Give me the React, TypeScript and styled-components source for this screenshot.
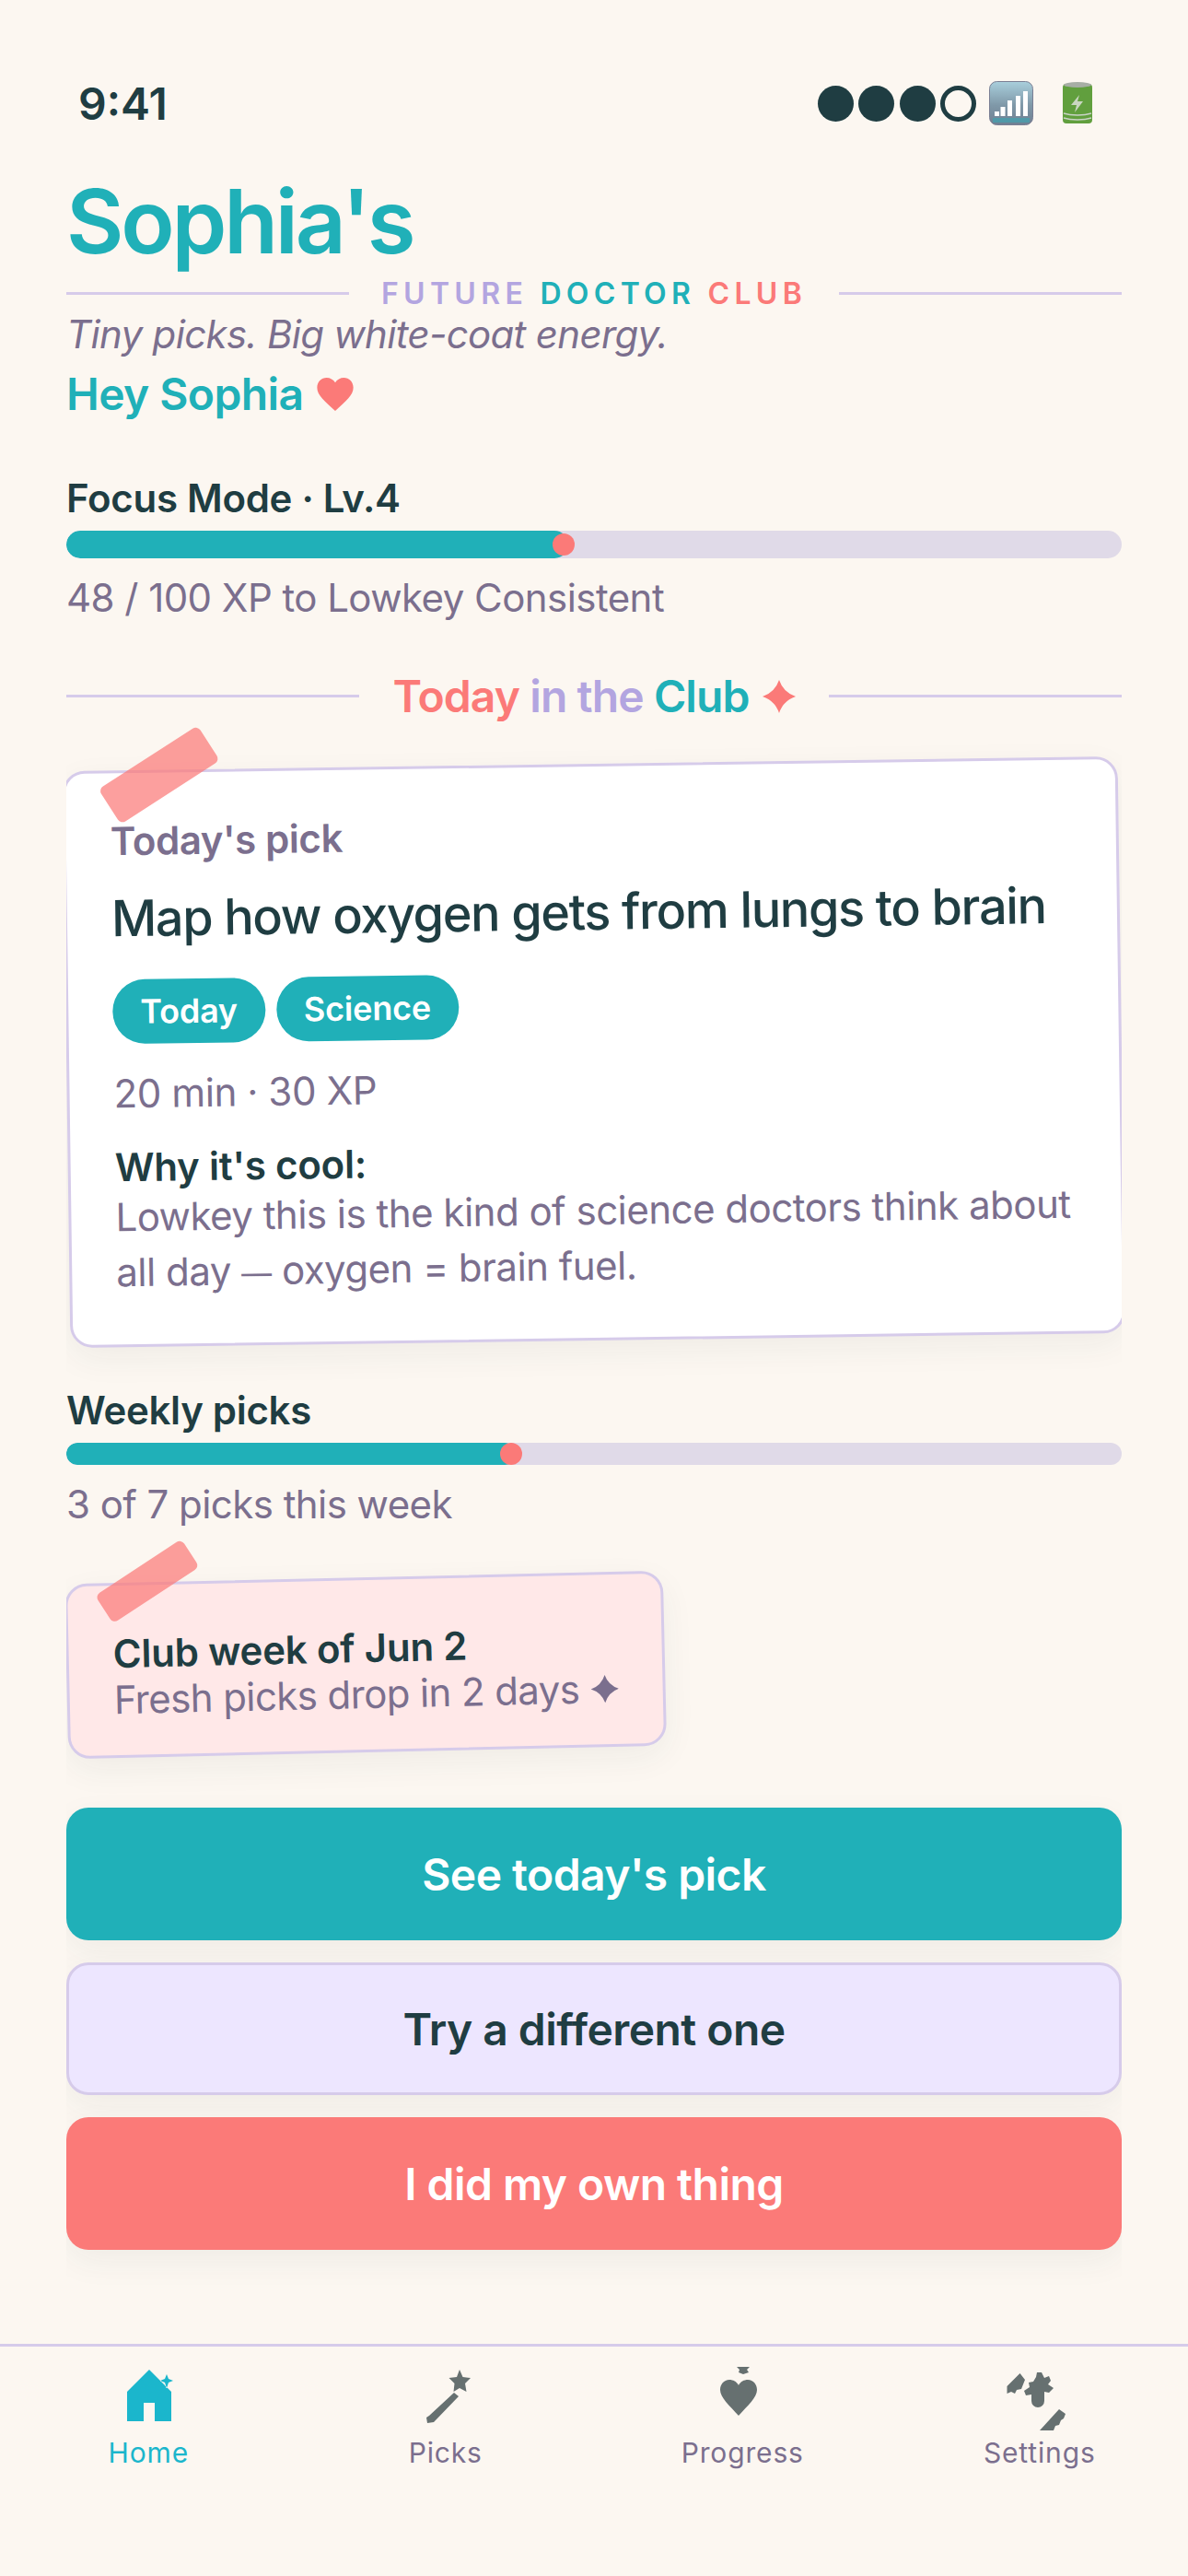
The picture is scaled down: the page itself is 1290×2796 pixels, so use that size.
import React from "react";
import styled, { createGlobalStyle } from "styled-components";

const INK = "#1f3d42";
const MUTED = "#7b6f8e";
const TEAL = "#20b0b8";
const CORAL = "#fb7a78";
const LAVENDER = "#b3a5e0";
const LINE = "#d6cbea";
const PAPER = "#fcf7f1";

const GlobalStyle = createGlobalStyle`
  html, body {
    margin: 0;
    padding: 0;
    background: ${PAPER};
  }
  body {
    font-family: Inter, "Liberation Sans", sans-serif;
    color: ${INK};
  }
`;

const Screen = styled.div`
  width: 1290px;
  height: 2796px;
  display: flex;
  flex-direction: column;
  background: ${PAPER};
  overflow: hidden;
`;

const StatusBar = styled.div`
  height: 48px;
  margin-top: 88px;
  padding: 0 104px 0 85px;
  display: flex;
  align-items: center;
  justify-content: space-between;
`;

const Clock = styled.span`
  font-size: 48px;
  font-weight: 600;
  color: ${INK};
`;

const StatusIcons = styled.div`
  display: flex;
  align-items: center;
`;

const Dot = styled.span<{ $empty?: boolean }>`
  width: 39px;
  height: 39px;
  box-sizing: border-box;
  border-radius: 50%;
  margin-right: ${(p) => (p.$empty ? 14 : 5.5)}px;
  background: ${(p) => (p.$empty ? "transparent" : INK)};
  border: ${(p) => (p.$empty ? `5px solid ${INK}` : "none")};
`;

const BatterySlot = styled.span`
  margin-left: 32px;
  display: flex;
`;

const Content = styled.main`
  flex: 1;
  margin: 0 72px;
  padding-top: 46px;
  overflow: hidden;
`;

const Title = styled.h1`
  margin: 0;
  font-size: 96px;
  line-height: 116px;
  font-weight: 600;
  letter-spacing: -3.2px;
  color: ${TEAL};
`;

const Rule = styled.div`
  flex: 1;
  height: 3px;
  background: ${LINE};
`;

const BrandRow = styled.div`
  display: flex;
  align-items: center;
  gap: 35px;
  height: 36px;
  margin-top: 2px;
`;

const Brand = styled.span`
  font-size: 32px;
  font-weight: 600;
  letter-spacing: 5.3px;
`;

const Tone = styled.span<{ $color: string }>`
  color: ${(p) => p.$color};
`;

const Tagline = styled.p`
  margin: 0;
  font-size: 42px;
  line-height: 54px;
  font-style: italic;
  letter-spacing: -0.68px;
  color: ${MUTED};
`;

const Greeting = styled.p`
  margin: 6px 0 0;
  font-size: 48px;
  line-height: 64px;
  font-weight: 600;
  letter-spacing: -0.6px;
  color: ${TEAL};
  display: flex;
  align-items: center;
  gap: 14px;
`;

const MeterLabel = styled.div<{ $top: number }>`
  margin-top: ${(p) => p.$top}px;
  font-size: 42px;
  line-height: 54px;
  font-weight: 600;
  letter-spacing: -0.3px;
  color: ${INK};
`;

const Track = styled.div<{ $h: number }>`
  position: relative;
  height: ${(p) => p.$h}px;
  margin-top: 8px;
  border-radius: ${(p) => p.$h / 2}px;
  background: #e0dae8;
  overflow: hidden;
`;

const Fill = styled.div`
  height: 100%;
  border-radius: 16px;
  background: ${TEAL};
`;

const Knob = styled.span`
  position: absolute;
  top: 50%;
  width: 24px;
  height: 24px;
  margin: -12px 0 0 -12px;
  border-radius: 50%;
  background: ${CORAL};
`;

const MeterNote = styled.div`
  margin-top: 16px;
  font-size: 42px;
  line-height: 54px;
  letter-spacing: -0.55px;
  color: ${MUTED};
`;

const SectionRow = styled.div`
  margin-top: 51px;
  display: flex;
  align-items: center;
  gap: 36px;
`;

const SectionRule = styled(Rule)`
  position: relative;
  top: -1px;
`;

const SectionTitle = styled.h2`
  margin: 0;
  font-size: 48px;
  line-height: 58px;
  font-weight: 600;
  letter-spacing: -0.9px;
  display: flex;
  align-items: center;
  gap: 14px;
`;

const PickCard = styled.section`
  position: relative;
  height: 626px;
  margin-top: 44px;
  box-sizing: border-box;
  padding: 47px 48px 0;
  background: #fff;
  border: 3px solid ${LINE};
  border-radius: 24px;
  box-shadow: 0 12px 36px rgba(31, 61, 66, 0.06);
  transform: rotate(-0.8deg);
`;

const Tape = styled.span<{ $w: number; $h: number; $left: number; $top: number }>`
  position: absolute;
  left: ${(p) => p.$left}px;
  top: ${(p) => p.$top}px;
  width: ${(p) => p.$w}px;
  height: ${(p) => p.$h}px;
  border-radius: 6px;
  background: rgba(251, 122, 120, 0.72);
  transform: rotate(-32deg);
`;

const PickKicker = styled.div`
  font-size: 42px;
  line-height: 54px;
  font-weight: 600;
  letter-spacing: -0.4px;
  color: ${MUTED};
`;

const PickTitle = styled.h3`
  margin: 21px 0 0;
  font-size: 54px;
  line-height: 72px;
  font-weight: 500;
  letter-spacing: -1.36px;
  color: ${INK};
  white-space: nowrap;
`;

const Chips = styled.div`
  display: flex;
  gap: 12px;
  margin-top: 30px;
`;

const Chip = styled.span`
  height: 70px;
  padding: 0 30px;
  display: flex;
  align-items: center;
  border-radius: 35px;
  background: ${TEAL};
  color: #fff;
  font-size: 36px;
  font-weight: 600;
  letter-spacing: -0.2px;
`;

const PickMeta = styled.div`
  margin-top: 27px;
  font-size: 42px;
  line-height: 54px;
  letter-spacing: -0.4px;
  color: ${MUTED};
`;

const WhyTitle = styled.div`
  margin-top: 29px;
  font-size: 42px;
  line-height: 48px;
  font-weight: 600;
  letter-spacing: -0.2px;
  color: ${INK};
`;

const WhyBody = styled.p`
  margin: 0;
  font-size: 42px;
  line-height: 60px;
  letter-spacing: -0.5px;
  color: ${MUTED};
`;

const Dash = styled.span`
  font-size: 33px;
`;

const NoteCard = styled.section`
  position: relative;
  width: 650px;
  height: 190px;
  margin-top: 52px;
  box-sizing: border-box;
  padding: 49px 48px 0;
  background: #ffe8e8;
  border: 3px solid ${LINE};
  border-radius: 24px;
  box-shadow: 0 12px 36px rgba(31, 61, 66, 0.06);
  transform: rotate(-1.3deg);
`;

const NoteTitle = styled.div`
  font-size: 42px;
  line-height: 50px;
  font-weight: 600;
  letter-spacing: -0.2px;
  color: ${INK};
`;

const NoteBody = styled.div`
  font-size: 42px;
  line-height: 50px;
  letter-spacing: -0.6px;
  color: ${MUTED};
  display: flex;
  align-items: center;
  gap: 12px;
  white-space: nowrap;
`;

const Actions = styled.div`
  margin-top: 60px;
  display: flex;
  flex-direction: column;
  gap: 24px;
`;

const ActionButton = styled.button<{ $kind: "teal" | "lavender" | "coral" }>`
  height: 144px;
  box-sizing: border-box;
  border-radius: 24px;
  font-family: inherit;
  font-size: 48px;
  font-weight: 600;
  letter-spacing: -0.55px;
  color: ${(p) => (p.$kind === "lavender" ? INK : "#fff")};
  background: ${(p) =>
    p.$kind === "teal" ? TEAL : p.$kind === "coral" ? CORAL : "#ede6ff"};
  border: ${(p) => (p.$kind === "lavender" ? `3px solid ${LINE}` : "none")};
  box-shadow: 0 12px 36px rgba(31, 61, 66, 0.06);
`;

const TabBar = styled.nav`
  height: 252px;
  box-sizing: border-box;
  border-top: 3px solid ${LINE};
  padding-top: 21px;
  display: grid;
  grid-template-columns: repeat(4, 322.5px);
`;

const Tab = styled.div<{ $active?: boolean }>`
  display: flex;
  flex-direction: column;
  align-items: center;
  color: ${(p) => (p.$active ? "#1bb6cc" : MUTED)};
  font-size: 30px;
  line-height: 40px;
  font-weight: 400;
  letter-spacing: 0.85px;
`;

const TabIcon = styled.svg`
  display: block;
  width: 72px;
  height: 70px;
  margin-bottom: 4px;
`;

const Sparkle = ({ size, color }: { size: number; color: string }) => (
  <svg width={size} height={size} viewBox="0 0 24 24">
    <path d="M12 0Q15 9 24 12 15 15 12 24 9 15 0 12 9 9 12 0z" fill={color} />
  </svg>
);

const SignalIcon = () => (
  <svg width="48" height="48" viewBox="0 0 48 48">
    <defs>
      <linearGradient id="sig" x1="0" y1="0" x2="0" y2="1">
        <stop offset="0" stopColor="#a9cfdc" />
        <stop offset="0.55" stopColor="#7f98a8" />
        <stop offset="1" stopColor="#6f7f92" />
      </linearGradient>
    </defs>
    <rect x="0.500" y="0.500" width="47" height="47" rx="8" fill="url(#sig)" stroke="#7b7f94" />
    <path d="M6 33h5v5H6zM12.500 28h5v10h-5zM20 21h5v17h-5zM29 16h5v22h-5zM37 11h5v27h-5z" fill="#fff" />
    <rect x="4" y="40" width="40" height="5" fill="#3aa6b4" opacity="0.6" />
  </svg>
);

const BatteryIcon = () => (
  <svg width="32" height="48" viewBox="0 0 32 48">
    <rect x="0" y="3" width="32" height="43" rx="4" fill="#619f3e" />
    <ellipse cx="16" cy="4" rx="15" ry="3" fill="#a7aea5" />
    <path d="M18 15l-9 11h6l-2 8 9-12h-6z" fill="#c9d6c0" />
    <path d="M1 35c8 2.500 22 2.500 30 0M1 40c8 2.500 22 2.500 30 0" stroke="#c9d3c6" strokeWidth="1.500" fill="none" />
  </svg>
);

const HomeGlyph = () => (
  <TabIcon viewBox="0 0 72 70" fill="currentColor">
    <path d="M37 4L13 28v32h18V40h12v20h18V28z" />
    <path d="M56 9l2 5 5 2-5 2-2 6-2-6-5-2 5-2z" stroke={PAPER} strokeWidth="1" paintOrder="stroke" />
  </TabIcon>
);

const WandGlyph = () => (
  <TabIcon viewBox="0 0 72 70" fill="#667070">
    <path d="M51 4l3.500 8 8.500 1-6 6 1.500 9-7.500-4-6.500 4 1-9-6-6 8.500-1z" />
    <path d="M45 29l5 4-27 28-7 1-1-6 3-2z" />
  </TabIcon>
);

const HeartGlyph = () => (
  <TabIcon viewBox="0 0 72 70" fill="#667070">
    <path d="M30 1h14l-3 3 2 3-6 2-5-2 1-3z" />
    <path d="M32 54C22 43 12 34 12 26c0-6 4-11 10-11 4 0 8 2 10 6 2-4 6-6 10-6 6 0 10 5 10 11 0 8-10 17-20 28z" />
  </TabIcon>
);

const GearGlyph = () => (
  <TabIcon viewBox="0 0 72 70" fill="#667070">
    <path d="M0.500 30V22L14.500 8 20 15l-4 10-5 1-2 4-4-2z" />
    <path d="M33 7h5l3 6 5-2 2 5-3 4 6 4-5 5-5-1v10a7 7 0 0 1-14 0V31l-6 1-2-5 6-4-1-5 5-1 3-5z" />
    <path d="M36 70l21-23 7 5-2 5-3 2-2 5-4 1-2 5z" />
  </TabIcon>
);

export default function App() {
  return (
    <Screen>
      <GlobalStyle />
      <StatusBar>
        <Clock>9:41</Clock>
        <StatusIcons>
          <Dot />
          <Dot />
          <Dot />
          <Dot $empty />
          <SignalIcon />
          <BatterySlot>
            <BatteryIcon />
          </BatterySlot>
        </StatusIcons>
      </StatusBar>

      <Content>
        <Title>Sophia's</Title>
        <BrandRow>
          <Rule />
          <Brand>
            <Tone $color={LAVENDER}>FUTURE</Tone> <Tone $color={TEAL}>DOCTOR</Tone>{" "}
            <Tone $color={CORAL}>CLUB</Tone>
          </Brand>
          <Rule />
        </BrandRow>
        <Tagline>Tiny picks. Big white-coat energy.</Tagline>
        <Greeting>
          Hey Sophia
          <svg width="40" height="36" viewBox="0 0 24 22">
            <path
              d="M12 22C5 15.500 0 11.500 0 6.500 0 2.800 2.800 0 6.300 0 8.600 0 10.800 1.200 12 3.200 13.200 1.200 15.400 0 17.700 0 21.200 0 24 2.800 24 6.500c0 5-5 9-12 15.500z"
              fill={CORAL}
            />
          </svg>
        </Greeting>

        <MeterLabel $top={54}>Focus Mode · Lv.4</MeterLabel>
        <Track $h={30}>
          <Fill style={{ width: "47.600%" }} />
          <Knob style={{ left: "47.120%" }} />
        </Track>
        <MeterNote>48 / 100 XP to Lowkey Consistent</MeterNote>

        <SectionRow>
          <SectionRule />
          <SectionTitle>
            <span>
              <Tone $color={CORAL}>Today</Tone> <Tone $color={LAVENDER}>in the</Tone>{" "}
              <Tone $color={TEAL}>Club</Tone>
            </span>
            <Sparkle size={36} color={CORAL} />
          </SectionTitle>
          <SectionRule />
        </SectionRow>

        <PickCard>
          <Tape $w={128} $h={45} $left={38} $top={-20} />
          <PickKicker>Today's pick</PickKicker>
          <PickTitle>Map how oxygen gets from lungs to brain</PickTitle>
          <Chips>
            <Chip>Today</Chip>
            <Chip>Science</Chip>
          </Chips>
          <PickMeta>20 min · 30 XP</PickMeta>
          <WhyTitle>Why it's cool:</WhyTitle>
          <WhyBody>
            Lowkey this is the kind of science doctors think about all day <Dash>—</Dash> oxygen =
            brain fuel.
          </WhyBody>
        </PickCard>

        <MeterLabel $top={49}>Weekly picks</MeterLabel>
        <Track $h={24}>
          <Fill style={{ width: "42.600%" }} />
          <Knob style={{ left: "42.150%" }} />
        </Track>
        <MeterNote>3 of 7 picks this week</MeterNote>

        <NoteCard>
          <Tape $w={112} $h={36} $left={31} $top={-22} />
          <NoteTitle>Club week of Jun 2</NoteTitle>
          <NoteBody>
            Fresh picks drop in 2 days
            <Sparkle size={32} color={MUTED} />
          </NoteBody>
        </NoteCard>

        <Actions>
          <ActionButton $kind="teal">See today's pick</ActionButton>
          <ActionButton $kind="lavender">Try a different one</ActionButton>
          <ActionButton $kind="coral">I did my own thing</ActionButton>
        </Actions>
      </Content>

      <TabBar>
        <Tab $active>
          <HomeGlyph />
          Home
        </Tab>
        <Tab>
          <WandGlyph />
          Picks
        </Tab>
        <Tab>
          <HeartGlyph />
          Progress
        </Tab>
        <Tab>
          <GearGlyph />
          Settings
        </Tab>
      </TabBar>
    </Screen>
  );
}
